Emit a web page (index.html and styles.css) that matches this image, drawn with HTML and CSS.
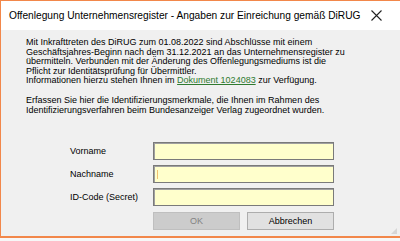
FILE: index.html
```html
<!DOCTYPE html>
<html lang="de">
<head>
    <meta charset="UTF-8">
    <title>Offenlegung Unternehmensregister</title>
    <link rel="stylesheet" href="styles.css">
</head>
<body>
    <div class="dialog">
        <!-- Title bar -->
        <div class="title-bar">
            <span class="title-text">Offenlegung Unternehmensregister - Angaben zur Einreichung gemäß DiRUG</span>
            <span class="close-btn">
                <svg width="11" height="11" viewBox="0 0 11 11">
                    <path d="M0.5 0.5 L10.5 10.5 M10.5 0.5 L0.5 10.5" stroke="#222" stroke-width="1.1" fill="none"/>
                </svg>
            </span>
        </div>

        <!-- Body -->
        <div class="dialog-body">
            <p class="info">
                Mit Inkrafttreten des DiRUG zum 01.08.2022 sind Abschlüsse mit einem<br>
                Geschäftsjahres-Beginn nach dem 31.12.2021 an das Unternehmensregister zu<br>
                übermitteln. Verbunden mit der Änderung des Offenlegungsmediums ist die<br>
                Pflicht zur Identitätsprüfung für Übermittler.<br>
                Informationen hierzu stehen Ihnen im <a class="doc-link" href="#">Dokument 1024083</a> zur Verfügung.
            </p>
            <p class="info">
                Erfassen Sie hier die Identifizierungsmerkmale, die Ihnen im Rahmen des<br>
                Identifizierungsverfahren beim Bundesanzeiger Verlag zugeordnet wurden.
            </p>

            <div class="id-form">
                <label class="field-label">Vorname</label>
                <input class="field-input" type="text">
                <label class="field-label">Nachname</label>
                <div class="field-input"><span class="caret"></span></div>
                <label class="field-label">ID-Code (Secret)</label>
                <input class="field-input" type="text">
                <div></div>
                <div class="buttons">
                    <button class="btn" disabled>OK</button>
                    <button class="btn">Abbrechen</button>
                </div>
            </div>
            <div class="grip"></div>
        </div>
    </div>
</body>
</html>
```

FILE: styles.css
```css
* {
    margin: 0;
    padding: 0;
    box-sizing: border-box;
}

body {
    font-family: 'Liberation Sans', Arial, sans-serif;
    background: #f7f7f7;
    width: 400px;
    height: 241px;
    overflow: hidden;
}

.dialog {
    width: 400px;
    height: 238px;
    border-top: 1px solid #f2874a;
    border-left: 1px solid #f2874a;
    border-bottom: 2px solid #f2874a;
    background: #f0f0f0;
    display: flex;
    flex-direction: column;
}

.title-bar {
    height: 29px;
    background: #ffffff;
    display: flex;
    justify-content: space-between;
    align-items: center;
    padding-left: 8px;
    padding-right: 18px;
}

.title-text {
    font-size: 10.2px;
    color: #000;
    white-space: nowrap;
}

.close-btn {
    display: flex;
    align-items: center;
}

.dialog-body {
    flex: 1;
    position: relative;
    padding: 8px 10px 0 25px;
    color: #000;
}

.info {
    font-size: 9px;
    line-height: 9.6px;
    margin-bottom: 10px;
    white-space: nowrap;
}

.doc-link {
    color: #2f7a2f;
    text-decoration: underline;
}

.id-form {
    display: grid;
    grid-template-columns: 83px 181px;
    row-gap: 5px;
    margin-left: 44px;
    margin-top: 27px;
    align-items: center;
}

.field-label {
    font-size: 9px;
}

.field-input {
    height: 18px;
    background: #ffffcc;
    border: 1px solid #7a7a7a;
    box-shadow: inset 1px 1px 0 #a0a0a0;
    outline: none;
    position: relative;
}

.caret {
    position: absolute;
    left: 3px;
    top: 4px;
    width: 1px;
    height: 9px;
    background: #f0c070;
}

.buttons {
    display: flex;
    justify-content: space-between;
    margin-top: 1px;
}

.btn {
    width: 87px;
    height: 18px;
    font-family: 'Liberation Sans', Arial, sans-serif;
    font-size: 9px;
    background: #e1e1e1;
    border: 1px solid #adadad;
    color: #000;
}

.btn:disabled {
    background: #cccccc;
    border-color: #bfbfbf;
    color: #838383;
}

.grip {
    position: absolute;
    right: 3px;
    bottom: 2px;
    width: 6px;
    height: 6px;
    background:
        radial-gradient(circle, #b8b8b8 0.6px, transparent 0.8px) 0 0 / 2px 2px;
    clip-path: polygon(100% 0, 100% 100%, 0 100%);
}
```
